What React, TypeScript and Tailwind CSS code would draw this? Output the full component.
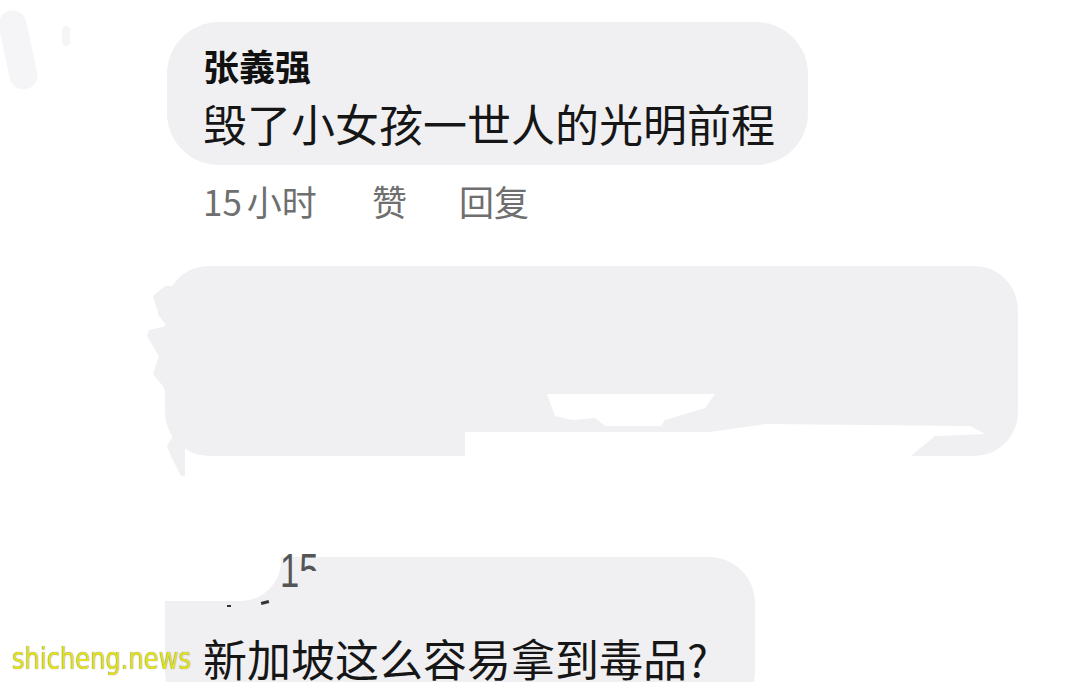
import React from 'react';

const cjk = "font-['Noto_Sans_CJK_SC','Noto_Sans',sans-serif]";

const Bubble = ({ children, className }: { children: React.ReactNode; className: string }) => (
  <div className={`relative bg-[#f0f0f2] ${className}`}>{children}</div>
);

const MetaRow = () => (
  <div className="flex items-center pl-[36px] mt-[15px] text-[35px] leading-[42px] text-[#6f6f6f]">
    <span>15<span className="ml-[5px]">小时</span></span>
    <span className="ml-[55px]">赞</span>
    <span className="ml-[52px]">回复</span>
  </div>
);

export default function App() {
  return (
    <div className={`relative w-[1080px] h-[682px] overflow-hidden bg-white ${cjk}`}>
      {/* faint smudges top-left */}
      <div className="absolute left-[4px] top-[10px] w-[28px] h-[80px] rounded-full bg-[#f5f5f7] rotate-[-12deg]" />
      <div className="absolute left-[62px] top-[26px] w-[8px] h-[20px] rounded-full bg-[#f5f5f7]" />

      <div className="flex flex-col pl-[167px] pt-[22px]">
        <Bubble className="w-[641px] h-[143px] rounded-[52px] pl-[36px] pt-[23px]">
          <div className="text-[36px] leading-[40px] font-bold text-[#111]">张義强</div>
          <div className="mt-[14px] text-[44px] leading-[48px] text-[#161616]">毁了小女孩一世人的光明前程</div>
        </Bubble>
        <MetaRow />

        {/* redacted comment */}
        <Bubble className="-ml-[2px] mt-[44px] w-[853px] h-[190px] rounded-[44px]">
          <svg className="absolute -left-[20px] top-[20px] w-[40px] h-[190px]" viewBox="0 0 40 190">
            <path d="M20 0 L8 10 L14 30 L22 40 L4 44 L2 50 L14 70 L8 88 L18 100 L26 120 L28 150 L22 160 L26 170 L36 190 H40 V0 Z" fill="#f0f0f2" />
          </svg>
          <svg className="absolute left-[300px] top-[128px] w-[560px] h-[80px]" viewBox="0 0 560 80">
            <path d="M82 0 H250 L240 14 L200 26 L196 32 L140 32 L130 24 L108 26 L90 22 Z" fill="#fff" />
            <path d="M0 38 H245 L300 30 L505 32 L520 40 L470 42 L448 60 L440 72 L560 72 V80 H0 Z" fill="#fff" />
          </svg>
        </Bubble>

        {/* third comment, cut off at bottom */}
        <Bubble className="-ml-[2px] mt-[101px] w-[590px] h-[160px] rounded-[46px] pl-[38px] pt-[77px]">
          <div className="absolute -left-[4px] -top-[2px] w-[120px] h-[46px] rounded-br-[40px] bg-white" />
          <div className="absolute left-[115px] -top-[6px] text-[48px] leading-[40px] text-[#555] scale-x-[0.72] origin-left font-['Liberation_Sans',sans-serif] flex">
            <span>1</span>
            <span className="inline-block h-[20px] overflow-hidden">5</span>
          </div>
          <div className="absolute left-[62px] top-[48px] w-[4px] h-[2px] bg-[#333]" />
          <div className="absolute left-[96px] top-[44px] w-[8px] h-[3px] bg-[#333] rotate-[-15deg]" />
          <div className="relative text-[44px] leading-[48px] text-[#161616]">新加坡这么容易拿到毒品?</div>
        </Bubble>
      </div>

      <div className="absolute left-[12px] top-[640px] origin-left scale-x-[0.78] text-[31px] leading-[36px] text-[#e2e21e] font-['DejaVu_Sans',sans-serif] [text-shadow:0_0_1px_#666]">
        shicheng.news
      </div>
    </div>
  );
}
